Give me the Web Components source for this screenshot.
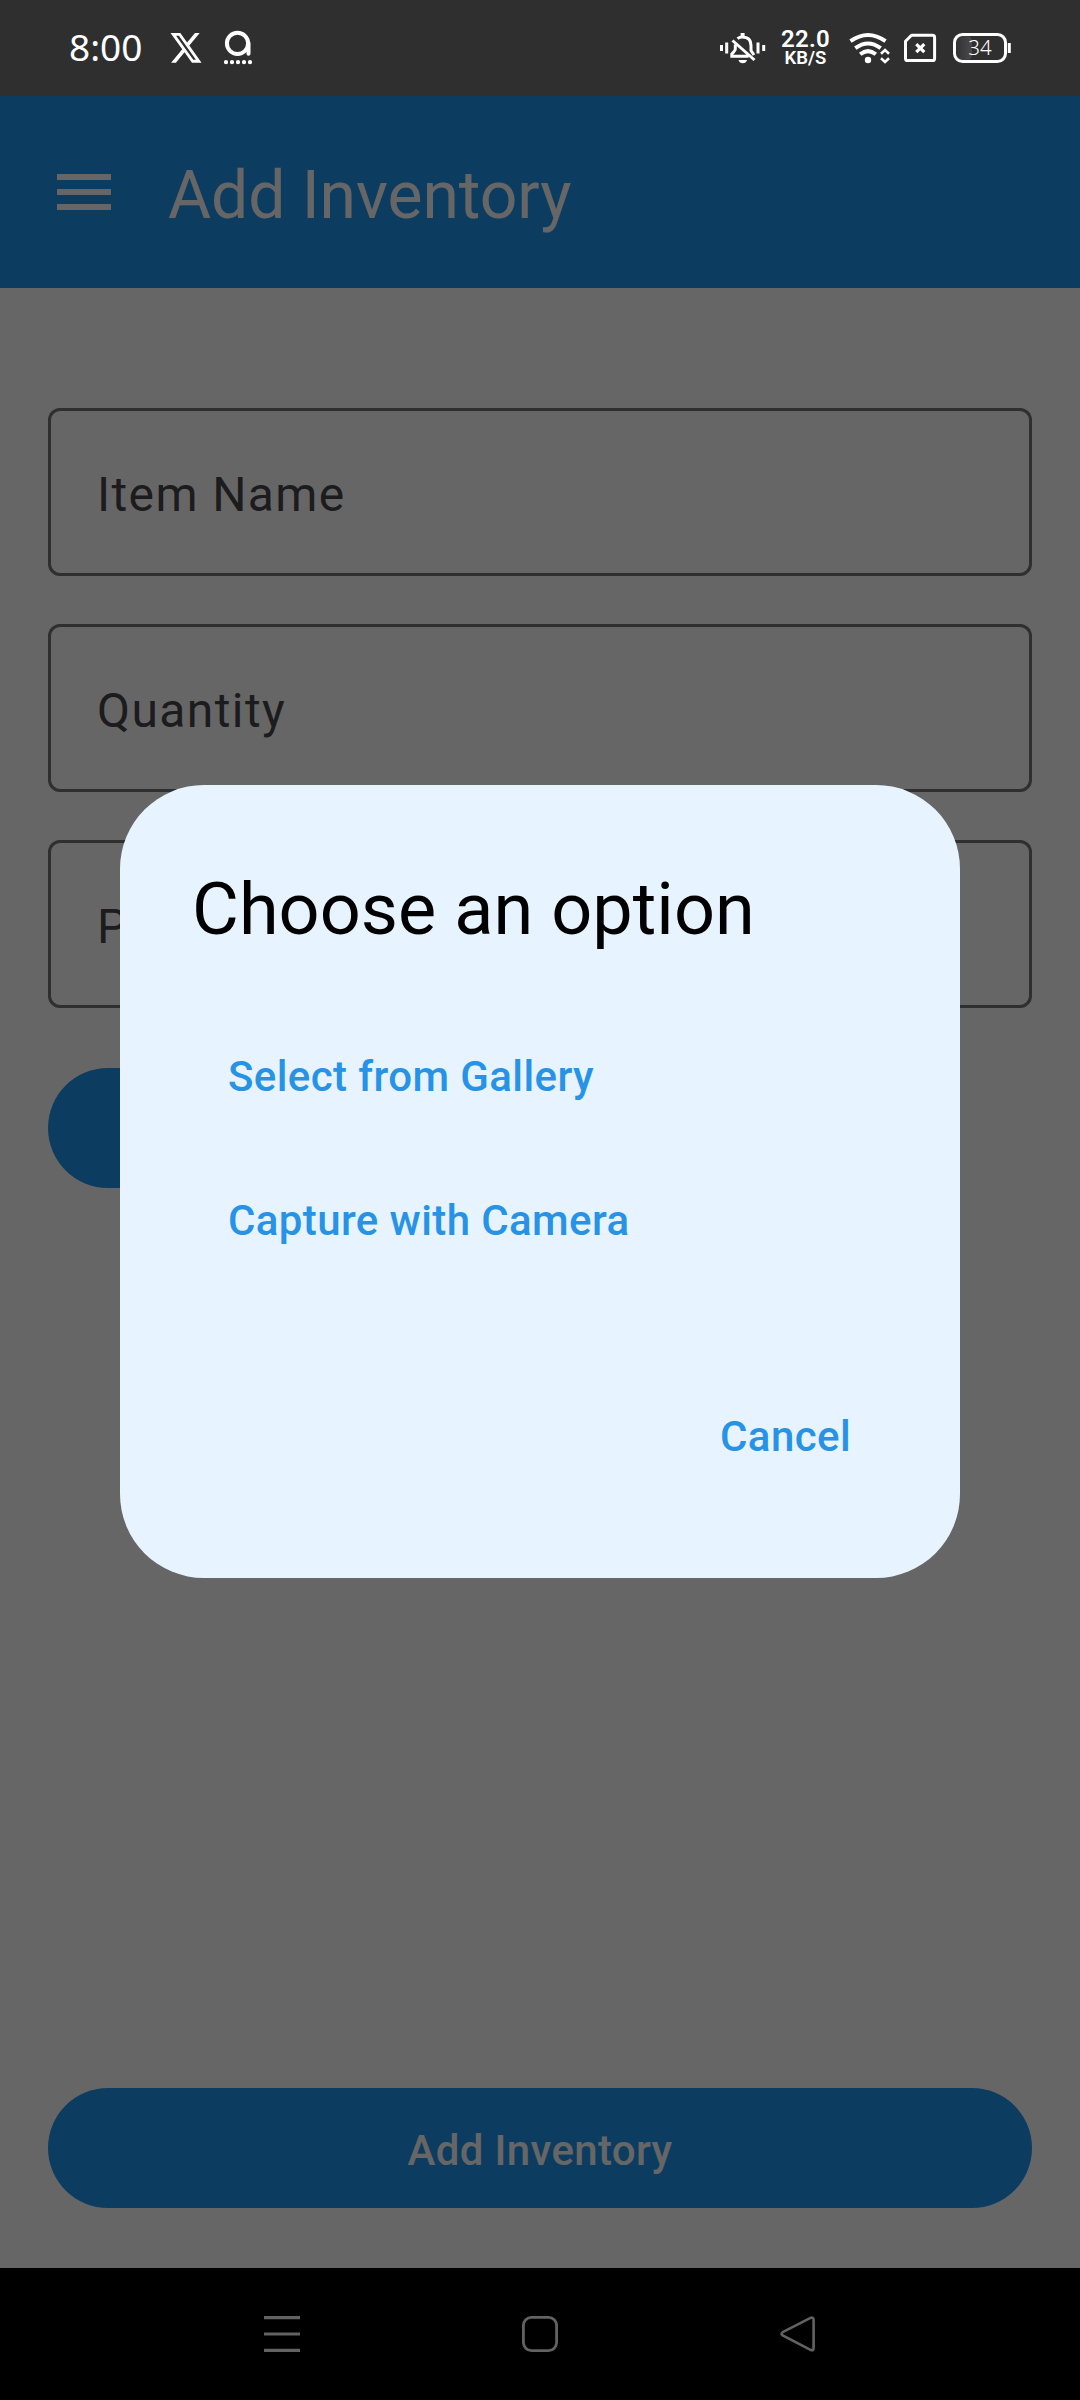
<!DOCTYPE html>
<html lang="en">
<head>
<meta charset="utf-8">
<title>Add Inventory</title>
<style>
html,body{margin:0;padding:0;background:#000}
body{width:1080px;height:2400px;overflow:hidden;font-family:Roboto,"Liberation Sans",sans-serif}
</style>
</head>
<body>
<phone-screen>
  <status-bar slot="status" time="8:00" rate="22.0" unit="KB/S" battery="34"></status-bar>
  <app-bar slot="bar">Add Inventory</app-bar>
  <text-field>Item Name</text-field>
  <text-field>Quantity</text-field>
  <text-field>P</text-field>
  <pill-button class="image"></pill-button>
  <pill-button slot="footer">Add Inventory</pill-button>
  <option-dialog slot="dialog">
    <span slot="title">Choose an option</span>
    <text-button>Select from Gallery</text-button>
    <text-button>Capture with Camera</text-button>
    <text-button slot="action">Cancel</text-button>
  </option-dialog>
  <nav-bar slot="nav"></nav-bar>
</phone-screen>
<script>
function define(name, html) {
  const template = document.createElement('template');
  template.innerHTML = html;
  customElements.define(name, class extends HTMLElement {
    constructor() {
      super();
      this.attachShadow({ mode: 'open' }).append(template.content.cloneNode(true));
      this.shadowRoot.querySelectorAll('[data-attr]').forEach(el => {
        el.textContent = this.getAttribute(el.dataset.attr) || '';
      });
    }
  });
}

define('phone-screen', `
<style>
:host{display:flex;flex-direction:column;width:1080px;height:2400px}
.window{position:relative;display:flex;flex-direction:column;flex:1;background:#fff}
.form{flex:1;display:flex;flex-direction:column;gap:48px;padding:120px 48px 0}
::slotted(.image){margin-top:12px;align-self:flex-start;width:400px}
.footer{padding:0 48px 60px}
.scrim{position:absolute;inset:0;display:flex;align-items:center;justify-content:center;padding-bottom:1px;background:rgba(0,0,0,.6)}
</style>
<slot name="status"></slot>
<div class="window">
  <slot name="bar"></slot>
  <div class="form"><slot></slot></div>
  <div class="footer"><slot name="footer"></slot></div>
  <div class="scrim"><slot name="dialog"></slot></div>
</div>
<slot name="nav"></slot>`);

define('status-bar', `
<style>
:host{display:flex;justify-content:space-between;box-sizing:border-box;height:96px;padding:0 68px 0 69px;background:#2f2f2f;color:#fff}
.group{display:flex;align-items:center}
svg{display:block;height:96px;flex:none}
.time{width:101px;font-family:"Noto Sans",Roboto,sans-serif;font-size:37px;line-height:93px;padding-bottom:3px;white-space:nowrap}
.a{margin-left:20px}
.speed{width:49px;margin:0 19px 0 15px;display:flex;flex-direction:column;align-items:center;font-weight:600;white-space:nowrap}
.rate{font-size:24px;line-height:19px;letter-spacing:.2px}
.unit{font-size:18.5px;line-height:18px}
.sim{margin:0 15px 0 13px}
.battery{position:relative;width:60px;height:96px}
.level{position:absolute;left:1px;top:1px;width:54px;text-align:center;font-family:"Noto Sans",Roboto,sans-serif;font-size:20.5px;line-height:92px;font-weight:300}
</style>
<div class="group">
  <span class="time" data-attr="time"></span>
  <svg width="32" viewBox="170 0 32 96"><path fill="#fff" transform="translate(168.7 29.6) scale(1.44 1.52)" d="M18.244 2.25h3.308l-7.227 8.26 8.502 11.24H16.17l-5.214-6.817L4.99 21.75H1.68l7.73-8.835L1.254 2.25H8.08l4.713 6.231zm-1.161 17.52h1.833L7.084 4.126H5.117z"/></svg>
  <svg class="a" width="32" viewBox="222 0 32 96" fill="none" stroke="#fff"><circle cx="237.5" cy="43.3" r="10.6" stroke-width="4"/><path d="M248.5 43v10.8" stroke-width="4" stroke-linecap="round"/><path d="M226 62.2h25" stroke-width="4.2" stroke-linecap="round" stroke-dasharray="0 6"/></svg>
</div>
<div class="group">
  <svg width="48" viewBox="718 0 48 96" fill="none" stroke="#fff" stroke-width="3">
    <path d="M721.5 45v6M726.7 42.5v11M758 42.5v11M763.7 45v6"/>
    <path d="M737.5 38.6Q739.5 37 742.5 37Q751 37 751 45.5V50.5L754 55M735.3 44.5V49Q735.3 50.5 731.8 54V56.3H748.5M732.5 40.5L754.5 60"/>
    <path d="M742.6 33v4" stroke-width="4"/><path d="M738.5 60h8.5q-1 3.2-4.2 3.2t-4.3-3.2z" fill="#fff" stroke="none"/>
  </svg>
  <div class="speed"><span class="rate" data-attr="rate"></span><span class="unit" data-attr="unit"></span></div>
  <svg width="42" viewBox="849 0 42 96" fill="none" stroke="#fff" stroke-width="4">
    <path d="M850.5 41.2Q868 28.8 885.5 41.2M855.3 48.2Q868 38.8 880.7 48.2M860.2 54.3Q868 48 875.8 54.3"/>
    <circle cx="868" cy="60" r="3.2" fill="#fff" stroke="none"/>
    <path d="M881 53.7l4-3.7 4 3.7M881 58.3l4 3.7 4-3.7" stroke-width="2.6"/>
  </svg>
  <svg class="sim" width="33" viewBox="904 0 33 96" fill="none" stroke="#fff" stroke-width="3"><path d="M911.5 35.3H932.5Q934.6 35.3 934.6 37.4V58.4Q934.6 60.5 932.5 60.5H907.6Q905.5 60.5 905.5 58.4V41.3Z" stroke-linejoin="round"/><path d="M916.3 44.2l8 8M924.3 44.2l-8 8" stroke-width="3.2"/></svg>
  <div class="battery">
    <svg width="60" viewBox="952 0 60 96"><defs><linearGradient id="g"><stop offset="0" stop-color="#333"/><stop offset="1" stop-color="#484848"/></linearGradient></defs><rect x="956" y="36" width="16" height="24" rx="5" fill="url(#g)"/><rect x="954.5" y="34.5" width="51" height="27" rx="8" fill="none" stroke="#fff" stroke-width="3"/><path d="M1009.3 43v10" stroke="#fff" stroke-width="3"/></svg>
    <span class="level" data-attr="battery"></span>
  </div>
</div>`);

define('app-bar', `
<style>
:host{display:flex;align-items:center;gap:57px;box-sizing:border-box;height:192px;padding-left:57px;background:#2196f3;color:#fff}
svg{display:block}
.title{font-size:66px;line-height:84px;padding-top:8px;letter-spacing:-.05px;white-space:nowrap}
</style>
<svg width="54" height="36" viewBox="0 0 54 36"><path d="M0 3h54M0 18h54M0 33h54" stroke="#fff" stroke-width="6"/></svg>
<span class="title"><slot></slot></span>`);

define('text-field', `
<style>
:host{display:flex;align-items:center;box-sizing:border-box;height:168px;padding:5px 45px 0 46px;border:3px solid #767676;border-radius:12px;color:#48474b;font-size:48px;line-height:72px;letter-spacing:1.4px}
</style>
<slot></slot>`);

define('pill-button', `
<style>
:host{display:flex;align-items:center;justify-content:center;box-sizing:border-box;height:120px;padding-top:5px;border-radius:60px;background:#2196f3;color:#fff;font-size:42px;line-height:60px;font-weight:500;letter-spacing:.35px}
</style>
<slot></slot>`);

define('text-button', `
<style>
:host{display:flex;align-items:center;height:144px;padding:0 36px;color:#2793e6;font-size:42px;line-height:60px;font-weight:500;letter-spacing:.4px;white-space:nowrap}
</style>
<slot></slot>`);

define('option-dialog', `
<style>
:host{display:flex;flex-direction:column;box-sizing:border-box;width:840px;height:793px;padding:77px 73px 69px 72px;border-radius:84px;background:#e7f4ff}
.title{height:96px;font-size:72px;line-height:96px;letter-spacing:.05px;color:#000}
.options{margin-top:47px;display:flex;flex-direction:column}
.actions{margin-top:auto;display:flex;justify-content:flex-end}
</style>
<div class="title"><slot name="title"></slot></div>
<div class="options"><slot></slot></div>
<div class="actions"><slot name="action"></slot></div>`);

define('nav-bar', `
<style>
:host{display:flex;align-items:center;justify-content:center;gap:222px;height:132px;background:#000}
svg{display:block}
</style>
<svg width="36" height="36" viewBox="0 0 36 36"><path d="M0 1.7h36M0 18h36M0 34.3h36" stroke="#626262" stroke-width="3.2"/></svg>
<svg width="36" height="36" viewBox="0 0 36 36"><rect x="1.4" y="1.4" width="33.2" height="33.2" rx="8" fill="none" stroke="#626262" stroke-width="2.8"/></svg>
<svg width="36" height="36" viewBox="0 0 36 36"><path d="M2.7 16.2L30.5 1.9Q33.6 .8 33.6 3.8V32Q33.6 35.2 30.5 33.8L2.7 19.5Q.4 17.8 2.7 16.2Z" fill="none" stroke="#626262" stroke-width="2.6"/></svg>`);
</script>
</body>
</html>
